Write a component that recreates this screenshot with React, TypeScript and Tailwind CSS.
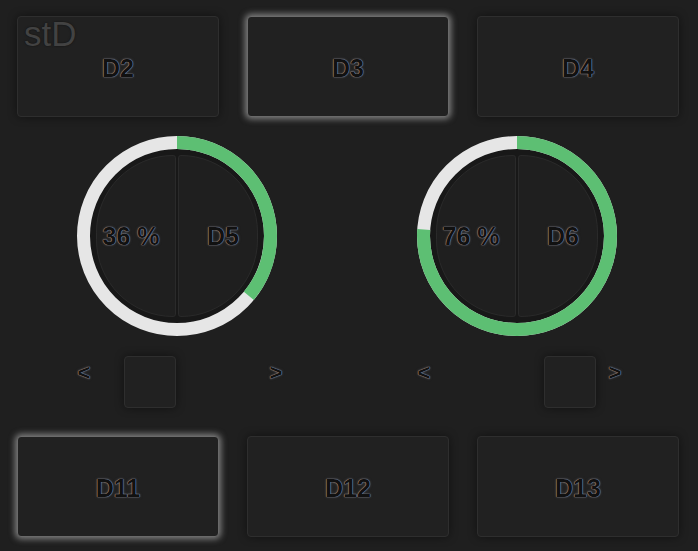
import React from "react";

const label =
  "font-bold leading-none text-[#111111] [text-shadow:0_0_1px_rgba(165,165,175,1),0_0_1px_rgba(165,165,175,1),0_0_3px_rgba(110,110,120,0.5)]";

function Tile({ text, active }: { text: string; active?: boolean }) {
  return (
    <div
      className={`h-[101px] rounded-[4px] bg-[#212121] border flex items-center justify-center pt-[3px] ${
        active
          ? "border-[#6a6a6a] shadow-[0_0_6px_2px_rgba(210,210,210,0.55)]"
          : "border-[#2e2e2e] shadow-[0_0_10px_rgba(0,0,0,0.45)]"
      }`}
    >
      <span className={label + " text-[25px]"}>{text}</span>
    </div>
  );
}

function Gauge({ value, name }: { value: number; name: string }) {
  const r = 93.5;
  const c = 2 * Math.PI * r;
  return (
    <div className="relative w-[200px] h-[200px]">
      <svg width="200" height="200" viewBox="0 0 200 200" className="absolute inset-0">
        <circle cx="100" cy="100" r="87" fill="#181818" />
        <circle cx="100" cy="100" r={r} fill="none" stroke="#e6e6e6" strokeWidth="13" />
        <circle
          cx="100"
          cy="100"
          r={r}
          fill="none"
          stroke="#5dbf73"
          strokeWidth="13"
          strokeDasharray={`${(c * value) / 100} ${c}`}
          transform="rotate(-90 100 100)"
        />
      </svg>
      <div className="absolute inset-0 flex items-center justify-center gap-[2px]">
        <div className="w-[80px] h-[162px] rounded-l-[81px] rounded-r-[3px] bg-[#1f1f1f] border border-[#2a2a2a] flex items-center justify-center pr-[10px]">
          <span className={label + " text-[25px]"}>{value} %</span>
        </div>
        <div className="w-[80px] h-[162px] rounded-r-[81px] rounded-l-[3px] bg-[#1f1f1f] border border-[#2a2a2a] flex items-center justify-center pl-[10px]">
          <span className={label + " text-[25px]"}>{name}</span>
        </div>
      </div>
    </div>
  );
}

function Square() {
  return (
    <div className="w-[52px] h-[52px] rounded-[4px] bg-[#212121] border border-[#2e2e2e] shadow-[0_0_10px_rgba(0,0,0,0.45)]" />
  );
}

function Arrow({ ch }: { ch: string }) {
  return (
    <span className={label + " text-[22px] w-[14px] text-center self-start mt-[6px]"}>{ch}</span>
  );
}

export default function App() {
  return (
    <div className="w-[698px] h-[551px] bg-[#1f1f1f] overflow-hidden relative [font-family:'Liberation_Sans',Arial,sans-serif]">
      <div className="px-[17px] pt-[16px] grid grid-cols-[202px_202px_202px] gap-x-[28px]">
        <Tile text="D2" />
        <Tile text="D3" active />
        <Tile text="D4" />
      </div>

      <span className="absolute left-[24px] top-[16px] text-[35px] leading-none text-[#424242] [text-shadow:0_0_2px_rgba(0,0,0,0.6)]">
        stD
      </span>

      <div className="flex pl-[77px] gap-[134px] mt-[19px]">
        <div className="flex flex-col">
          <Gauge value={36} name="D5" />
          <div className="w-[206px] flex items-start justify-between mt-[20px]">
            <div className="flex items-start">
              <Arrow ch="<" />
              <div className="ml-[33px]">
                <Square />
              </div>
            </div>
            <Arrow ch=">" />
          </div>
        </div>
        <div className="flex flex-col">
          <Gauge value={76} name="D6" />
          <div className="w-[205px] flex items-start justify-between mt-[20px]">
            <Arrow ch="<" />
            <div className="flex items-start">
              <Square />
              <div className="ml-[12px] flex">
                <Arrow ch=">" />
              </div>
            </div>
          </div>
        </div>
      </div>

      <div className="px-[17px] mt-[28px] grid grid-cols-[202px_202px_202px] gap-x-[28px]">
        <Tile text="D11" active />
        <Tile text="D12" />
        <Tile text="D13" />
      </div>
    </div>
  );
}
